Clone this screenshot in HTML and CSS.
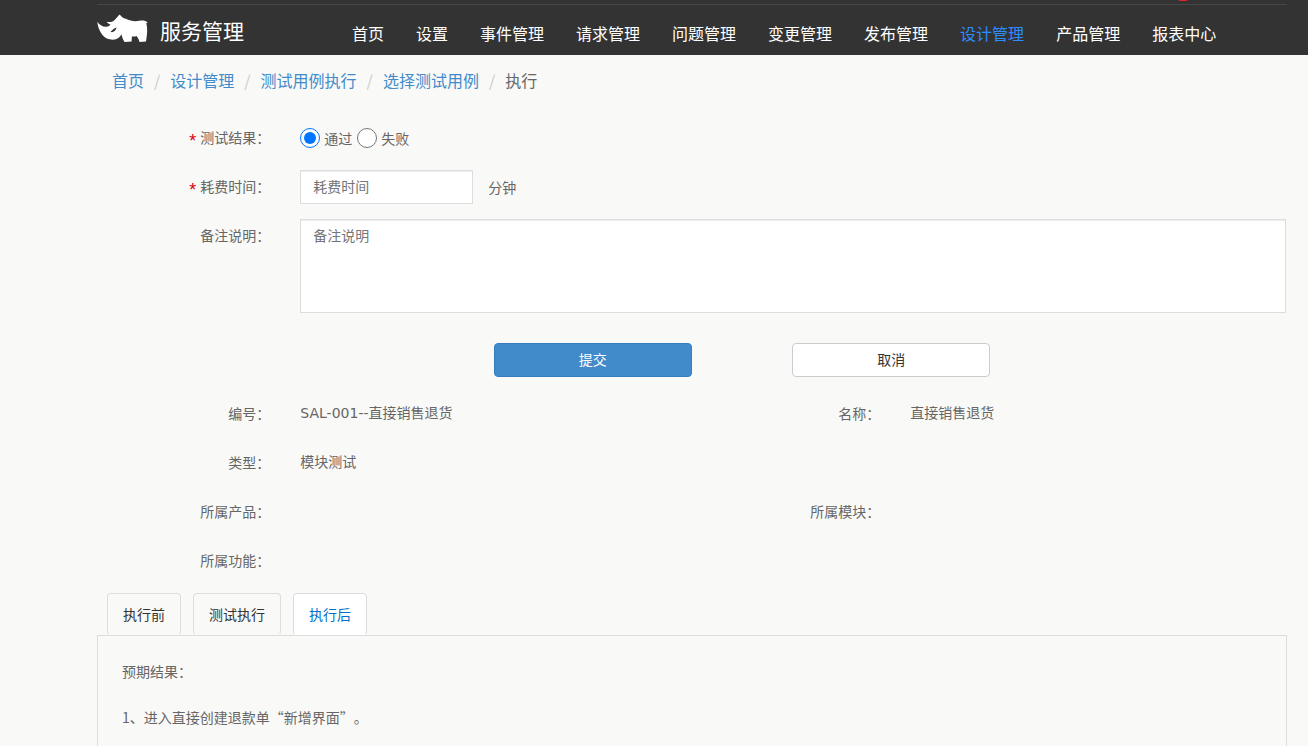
FILE: index.html
```html
<!DOCTYPE html>
<html lang="zh-CN">
<head>
    <meta charset="UTF-8">
    <meta name="viewport" content="width=device-width, initial-scale=1.0">
    <title>服务管理</title>
    <link rel="stylesheet" href="styles.css">
</head>
<body>
    <header class="header">
        <div class="topbar"><span class="topbar-dot"></span></div>
        <div class="navbar">
            <a class="logo" href="#">
                <svg class="logo-icon" viewBox="20 43 152 86" aria-hidden="true">
                    <path fill="#fff" d="M21 66 C27 75 37 82 48 81 C54 80 58 77 61 75 C56 73 51 70 49 66 C57 68 65 67 71 62 C77 56 82 49 88 44 C92 50 98 55 106 57 C118 63 132 66 146 63 C156 61 164 62 171 67 L167 70 C171 84 170 102 166 125 L147 126 C145 119 142 113 138 108 C133 110 128 110 124 110 L123 125 L102 126 C97 118 94 110 93 103 C88 111 82 117 74 119 C58 121 44 116 35 104 C27 93 22 80 21 66 Z"/>
                    <path fill="#333" d="M60 95 C66 93 67 86 78 83 C77 90 71 97 64 97 Z"/>
                </svg>
                <span class="logo-text">服务管理</span>
            </a>
            <nav class="nav">
                <a href="#">首页</a>
                <a href="#">设置</a>
                <a href="#">事件管理</a>
                <a href="#">请求管理</a>
                <a href="#">问题管理</a>
                <a href="#">变更管理</a>
                <a href="#">发布管理</a>
                <a class="active" href="#">设计管理</a>
                <a href="#">产品管理</a>
                <a href="#">报表中心</a>
            </nav>
        </div>
    </header>

    <main class="container">
        <ol class="breadcrumb">
            <li><a href="#">首页</a></li>
            <li><a href="#">设计管理</a></li>
            <li><a href="#">测试用例执行</a></li>
            <li><a href="#">选择测试用例</a></li>
            <li>执行</li>
        </ol>

        <form class="form">
            <div class="row" role="radiogroup" aria-labelledby="resultLabel">
                <span class="label" id="resultLabel"><span class="required">*</span>测试结果：</span>
                <div class="field">
                    <label class="radio"><input type="radio" name="result" checked>通过</label>
                    <label class="radio"><input type="radio" name="result">失败</label>
                </div>
            </div>
            <div class="row">
                <label class="label" for="costTime"><span class="required">*</span>耗费时间：</label>
                <div class="field">
                    <input class="control control-time" type="text" id="costTime" placeholder="耗费时间">
                    <span class="unit">分钟</span>
                </div>
            </div>
            <div class="row">
                <label class="label" for="remark">备注说明：</label>
                <div class="field">
                    <textarea class="control" id="remark" placeholder="备注说明"></textarea>
                </div>
            </div>
            <div class="buttons">
                <button class="btn btn-primary" type="submit">提交</button>
                <button class="btn" type="button">取消</button>
            </div>
        </form>

        <!-- Test case details -->
        <div class="details">
            <div class="detail"><span class="label">编号：</span><span class="value">SAL-001--直接销售退货</span></div>
            <div class="detail"><span class="label">名称：</span><span class="value">直接销售退货</span></div>
            <div class="detail detail-full"><span class="label">类型：</span><span class="value">模块测试</span></div>
            <div class="detail"><span class="label">所属产品：</span><span class="value"></span></div>
            <div class="detail"><span class="label">所属模块：</span><span class="value"></span></div>
            <div class="detail detail-full"><span class="label">所属功能：</span><span class="value"></span></div>
        </div>

        <div class="tabs" role="tablist">
            <button class="tab" type="button" role="tab">执行前</button>
            <button class="tab" type="button" role="tab">测试执行</button>
            <button class="tab active" type="button" role="tab" aria-selected="true">执行后</button>
        </div>
        <section class="panel">
            <p>预期结果：</p>
            <p>1、进入直接创建退款单“新增界面”。</p>
        </section>
    </main>
</body>
</html>
```
FILE: styles.css
```css
* {
    box-sizing: border-box;
}
body {
    display: flex;
    flex-direction: column;
    min-height: 100vh;
    margin: 0;
    background-color: #f9f9f7;
    color: #666;
    font-family: "Noto Sans CJK SC", sans-serif;
    font-size: 14px;
    line-height: 20px;
    text-spacing-trim: space-all;
}
a {
    color: #428bca;
    text-decoration: none;
}
button,
input,
textarea {
    font: inherit;
}

/* Header */
.header {
    height: 55px;
    padding: 0 21px 0 97px;
    background-color: #333;
}
.topbar {
    display: flex;
    justify-content: flex-end;
    height: 5px;
    padding-right: 100px;
    border-bottom: 1px solid #484848;
    overflow: hidden;
}
.topbar-dot {
    width: 8px;
    height: 1px;
    background-color: #e2231a;
}
.navbar {
    display: flex;
    align-items: flex-start;
}
.logo {
    display: flex;
    align-items: center;
    gap: 12px;
    width: 255px;
    padding-top: 6px;
    color: #fff;
}
.logo-icon {
    width: 51px;
    height: 29px;
}
.logo-text {
    padding-top: 4px;
    font-size: 21px;
    line-height: 30px;
}
.nav {
    display: flex;
    gap: 32px;
    padding-top: 16px;
    font-size: 16px;
    line-height: 24px;
    white-space: nowrap;
}
.nav a {
    color: #fff;
}
.nav a.active {
    color: #2d8cff;
}

/* Page */
.container {
    display: flex;
    flex: 1;
    flex-direction: column;
    padding: 0 21px 0 97px;
}
.breadcrumb {
    display: flex;
    margin: 0;
    padding: 13px 15px 29px;
    font-size: 16px;
    line-height: 24px;
    list-style: none;
}
.breadcrumb li + li::before {
    content: "/";
    padding: 0 10px;
    color: #ccc;
}

/* Form */
.row {
    display: flex;
    margin: 0 -15px 15px;
}
.label {
    flex: none;
    width: 16.6667%;
    padding-right: 15px;
    line-height: 32px;
    text-align: right;
}
.required {
    margin-right: 4px;
    color: #d9000f;
    font-family: "Liberation Sans", sans-serif;
    font-size: 18px;
    line-height: 1;
    vertical-align: -4px;
}
.field {
    display: flex;
    flex: 1;
    align-items: center;
    min-height: 34px;
    padding: 0 16px 0 15px;
}
.radio {
    display: flex;
    align-items: center;
    margin-right: 5px;
}
.radio input {
    width: 20px;
    height: 20px;
    margin: 0 4px 0 0;
}
.control {
    width: 100%;
    height: 34px;
    padding: 5px 12px 7px;
    border: 1px solid #ddd;
    border-radius: 0;
    background-color: #fff;
    box-shadow: inset 0 1px 1px rgba(0, 0, 0, 0.075);
    color: #555;
}
.control::placeholder {
    color: #757575;
}
.control-time {
    width: 173px;
}
textarea.control {
    display: block;
    height: 94px;
    resize: none;
}
.unit {
    margin-left: 15px;
}
.buttons {
    display: flex;
    gap: 100px;
    margin: 30px 0 20px;
    padding-left: 33.3333%;
}
.btn {
    width: 25%;
    height: 34px;
    padding: 0 0 2px;
    border: 1px solid #ccc;
    border-radius: 4px;
    background-color: #fff;
    color: #333;
    cursor: pointer;
}
.btn-primary {
    border-color: #357ebd;
    background-color: #428bca;
    color: #fff;
}

/* Details */
.details {
    display: grid;
    grid-template-columns: 1fr 1fr;
    row-gap: 15px;
    margin: 0 -15px 15px;
}
.detail {
    display: flex;
    min-height: 34px;
    line-height: 32px;
}
.detail .label {
    width: 33.3333%;
}
.detail-full {
    grid-column: 1 / 3;
}
.detail-full .label {
    width: 16.6667%;
}
.value {
    padding-left: 15px;
    font-family: "DejaVu Sans", "Noto Sans CJK SC", sans-serif;
}

/* Tabs */
.tabs {
    display: flex;
    gap: 12px;
    padding-left: 10px;
}
.tab {
    height: 42px;
    padding: 0 15px;
    border: 1px solid #ddd;
    border-bottom-color: transparent;
    border-radius: 4px;
    background-color: transparent;
    color: #333;
    cursor: pointer;
}
.tab.active {
    background-color: #fff;
    color: #0070c9;
}
.panel {
    flex: 1;
    padding: 12px 24px 0;
    border: 1px solid #ddd;
    border-bottom: none;
}
.panel p {
    margin: 0;
    line-height: 46px;
}
```
